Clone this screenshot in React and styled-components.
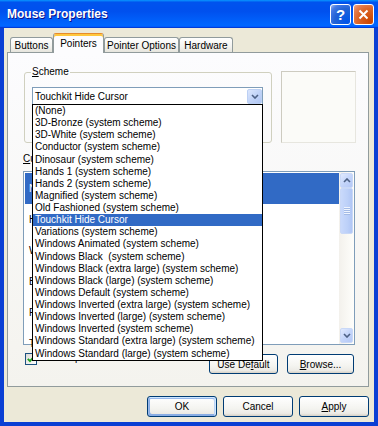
import React from 'react';
import styled, { createGlobalStyle, css } from 'styled-components';

const GlobalStyle = createGlobalStyle`
  html, body {
    margin: 0;
    padding: 0;
    background: #ffffff;
  }
  body {
    font-family: "Liberation Sans", Arial, sans-serif;
    font-size: 10px;
    color: #000;
  }
`;

const Window = styled.div`
  width: 378px;
  height: 426px;
  display: flex;
  flex-direction: column;
  overflow: hidden;
`;

const TitleBar = styled.div`
  height: 28px;
  flex: none;
  display: flex;
  align-items: center;
  gap: 2px;
  padding: 0 4px 0 7px;
  background: linear-gradient(180deg, #0997ff, #0053ee 8%, #0050ee 40%, #0066ff 88%, #0066ff 93%, #005bff 95%, #003dd7 96%, #003dd7);
`;

const Title = styled.div`
  flex: 1;
  color: #fff;
  font-weight: bold;
  font-size: 12px;
  text-shadow: 1px 1px #0f1089;
`;

const CaptionButton = styled.div`
  width: 21px;
  height: 21px;
  box-sizing: border-box;
  border: 1px solid #fff;
  border-radius: 3px;
  display: flex;
  align-items: center;
  justify-content: center;
  color: #fff;
  font: bold 15px "Liberation Sans", Arial, sans-serif;
  ${(p) =>
    p.$close
      ? css`
          background: radial-gradient(circle at 85% 85%, #cc4600, #dc6527 55%, #e57f52 80%, #f0a98c);
        `
      : css`
          background: radial-gradient(circle at 85% 85%, #0054e9, #2263d5 55%, #4479e4 80%, #a3bbec);
        `}
`;

const Body = styled.div`
  flex: 1;
  display: flex;
  flex-direction: column;
  background: #ece9d8;
  border: 4px solid #0a3fd4;
  border-top: none;
  padding-top: 5px;
`;

const TabStrip = styled.div`
  height: 19px;
  display: flex;
  align-items: flex-end;
  margin-left: 6px;
`;

const Tab = styled.div`
  position: relative;
  box-sizing: border-box;
  width: ${(p) => p.$w}px;
  height: 15px;
  border: 1px solid #919b9c;
  border-bottom: none;
  border-radius: 3px 3px 0 0;
  background: linear-gradient(180deg, #ffffff, #f3f3ef 60%, #e6e5dd);
  display: flex;
  align-items: center;
  justify-content: center;
  white-space: nowrap;
  ${(p) =>
    p.$active &&
    css`
      height: 20px;
      margin-bottom: -1px;
      z-index: 1;
      border-top: 1px solid #e68b2c;
      box-shadow: inset 0 2px #ffc73c;
      background: #fcfcfe;
    `}
`;

const TabPanel = styled.div`
  box-sizing: border-box;
  width: 362px;
  height: 335px;
  margin-left: 3px;
  border: 1px solid #919b9c;
  background: linear-gradient(180deg, #fcfcfe, #f4f3ee);
  padding: 13px 12px 0 15px;
  display: flex;
  flex-direction: column;
`;

const TopRow = styled.div`
  display: flex;
  align-items: flex-start;
`;

const Group = styled.fieldset`
  box-sizing: border-box;
  width: 248px;
  margin: 0 0 0 1px;
  padding: 0 7px 37px 7px;
  border: 1px solid #d0d0bf;
  border-radius: 3px;
  min-width: 0;
`;

const Legend = styled.legend`
  padding: 0 1px;
  margin-left: -1px;
  line-height: 12px;
`;

const Key = styled.span`
  text-decoration: underline;
`;

const Combo = styled.div`
  position: relative;
  box-sizing: border-box;
  width: 231px;
  height: 18px;
  margin-top: 9px;
  border: 1px solid #7f9db9;
  background: #fff;
  display: flex;
  align-items: center;
  padding-left: 2px;
`;

const ComboText = styled.div`
  flex: 1;
`;

const ComboButton = styled.div`
  box-sizing: border-box;
  width: 15px;
  height: 15px;
  border: 1px solid #bcd0f4;
  border-radius: 2px;
  background: linear-gradient(135deg, #dce7fd, #c2d4f8 50%, #b1c7f4);
  display: flex;
  align-items: center;
  justify-content: center;
`;

const DropList = styled.div`
  position: absolute;
  left: -1px;
  top: 100%;
  width: 231px;
  height: 257px;
  box-sizing: border-box;
  border: 1px solid #000;
  background: #fff;
  z-index: 10;
  overflow: hidden;
`;

const DropItem = styled.div`
  height: 12.14px;
  line-height: 12.14px;
  padding-left: 2px;
  white-space: pre;
  overflow: hidden;
  ${(p) =>
    p.$selected &&
    css`
      background: #316ac5;
      color: #fff;
    `}
`;

const Preview = styled.div`
  box-sizing: border-box;
  width: 75px;
  height: 72px;
  margin: 5px 0 0 9px;
  border: 1px solid #cdcbc0;
  border-right-color: #e7e6df;
  border-bottom-color: #e7e6df;
  background: #fbfbf8;
`;

const SectionLabel = styled.div`
  line-height: 12px;
  margin: 10px 0 6px 0;
`;

const CustomizeList = styled.div`
  box-sizing: border-box;
  width: 332px;
  height: 174px;
  border: 1px solid #7f9db9;
  background: #fff;
  display: flex;
`;

const Rows = styled.div`
  flex: 1;
  padding-top: 1px;
`;

const Row = styled.div`
  height: 31px;
  margin-left: 1px;
  padding-left: 4px;
  display: flex;
  align-items: center;
  white-space: nowrap;
  ${(p) =>
    p.$selected &&
    css`
      background: #316ac5;
      color: #fff;
    `}
`;

const Scrollbar = styled.div`
  width: 15px;
  display: flex;
  flex-direction: column;
  background: linear-gradient(90deg, #f3f1ec, #fefefb);
`;

const ScrollButton = styled.div`
  box-sizing: border-box;
  height: 15px;
  margin: 1px 1px 0 1px;
  border: 1px solid #c9d8f7;
  border-radius: 2px;
  background: linear-gradient(135deg, #e1eafe, #c4d5fa 50%, #b4c8f6);
  display: flex;
  align-items: center;
  justify-content: center;
  ${(p) => p.$bottom && css`margin: auto 1px 1px 1px;`}
`;

const Thumb = styled.div`
  box-sizing: border-box;
  height: 46px;
  margin: 0 1px;
  border: 1px solid #c9d8f7;
  border-radius: 2px;
  background: linear-gradient(90deg, #c9d9fb, #bcd0f8 60%, #b0c6f5);
  display: flex;
  align-items: center;
  justify-content: center;
`;

const Grip = styled.div`
  width: 6px;
  height: 8px;
  background: repeating-linear-gradient(180deg, #eef4fe 0 1px, #a4bbe6 1px 2px);
`;

const BottomRow = styled.div`
  display: flex;
  align-items: flex-start;
  margin-top: 9px;
  padding-right: 2px;
`;

const Check = styled.div`
  box-sizing: border-box;
  width: 12px;
  height: 12px;
  margin: -1px 0 0 2px;
  border: 1px solid #1c5180;
  background: linear-gradient(135deg, #dcdcd7, #fff);
  display: flex;
  align-items: center;
  justify-content: center;
`;

const CheckLabel = styled.div`
  margin: -2px 0 0 4px;
  line-height: 12px;
`;

const Button = styled.div`
  box-sizing: border-box;
  width: ${(p) => p.$w}px;
  height: ${(p) => p.$h || 20}px;
  margin-left: ${(p) => (p.$push ? 'auto' : `${p.$gap || 0}px`)};
  border: 1px solid #003c74;
  border-radius: 3px;
  background: linear-gradient(180deg, #ffffff, #f4f4f0 60%, #ecebe6 86%, #d6d0c5);
  display: flex;
  align-items: center;
  justify-content: center;
  white-space: nowrap;
  ${(p) =>
    p.$default &&
    css`
      box-shadow: inset -1px 1px #cee7ff, inset 1px 2px #98b8ea, inset -2px 2px #bcd4f6, inset 1px -1px #89ade4, inset 2px -2px #89ade4;
    `}
`;

const ButtonRow = styled.div`
  display: flex;
  justify-content: flex-end;
  gap: 6px;
  margin: 9px 5px 0 0;
`;

const schemes = [
  '(None)',
  '3D-Bronze (system scheme)',
  '3D-White (system scheme)',
  'Conductor (system scheme)',
  'Dinosaur (system scheme)',
  'Hands 1 (system scheme)',
  'Hands 2 (system scheme)',
  'Magnified (system scheme)',
  'Old Fashioned (system scheme)',
  'Touchkit Hide Cursor',
  'Variations (system scheme)',
  'Windows Animated (system scheme)',
  'Windows Black  (system scheme)',
  'Windows Black (extra large) (system scheme)',
  'Windows Black (large) (system scheme)',
  'Windows Default (system scheme)',
  'Windows Inverted (extra large) (system scheme)',
  'Windows Inverted (large) (system scheme)',
  'Windows Inverted (system scheme)',
  'Windows Standard (extra large) (system scheme)',
  'Windows Standard (large) (system scheme)',
];

const pointers = ['Normal Select', 'Help Select', 'Working In Background', 'Busy', 'Precision Select', 'Text Select'];

const Chevron = ({ up }) => (
  <svg width="8" height="5" viewBox="0 0 8 5">
    <path d={up ? 'M1 4L4 1L7 4' : 'M1 1L4 4L7 1'} fill="none" stroke="#4d6185" strokeWidth="1.6" />
  </svg>
);

function App() {
  const tabs = [
    { label: 'Buttons', w: 43 },
    { label: 'Pointers', w: 51, active: true },
    { label: 'Pointer Options', w: 75 },
    { label: 'Hardware', w: 54 },
  ];

  return (
    <Window>
      <GlobalStyle />
      <TitleBar>
        <Title>Mouse Properties</Title>
        <CaptionButton>?</CaptionButton>
        <CaptionButton $close>
          <svg width="11" height="11" viewBox="0 0 11 11">
            <path d="M1.5 1.5L9.5 9.5M9.5 1.5L1.5 9.5" stroke="#fff" strokeWidth="2" />
          </svg>
        </CaptionButton>
      </TitleBar>
      <Body>
        <TabStrip>
          {tabs.map((t) => (
            <Tab key={t.label} $w={t.w} $active={t.active}>
              {t.label}
            </Tab>
          ))}
        </TabStrip>
        <TabPanel>
          <TopRow>
            <Group>
              <Legend>
                <Key>S</Key>cheme
              </Legend>
              <Combo>
                <ComboText>Touchkit Hide Cursor</ComboText>
                <ComboButton>
                  <Chevron />
                </ComboButton>
                <DropList>
                  {schemes.map((s) => (
                    <DropItem key={s} $selected={s === 'Touchkit Hide Cursor'}>
                      {s}
                    </DropItem>
                  ))}
                </DropList>
              </Combo>
            </Group>
            <Preview />
          </TopRow>
          <SectionLabel>
            <Key>C</Key>ustomize:
          </SectionLabel>
          <CustomizeList>
            <Rows>
              {pointers.map((p, i) => (
                <Row key={p} $selected={i === 0}>
                  {p}
                </Row>
              ))}
            </Rows>
            <Scrollbar>
              <ScrollButton>
                <Chevron up />
              </ScrollButton>
              <Thumb>
                <Grip />
              </Thumb>
              <ScrollButton $bottom>
                <Chevron />
              </ScrollButton>
            </Scrollbar>
          </CustomizeList>
          <BottomRow>
            <Check>
              <svg width="8" height="8" viewBox="0 0 8 8">
                <path d="M0.8 3.8L3 6.2L7.2 1.4" fill="none" stroke="#21a121" strokeWidth="1.8" />
              </svg>
            </Check>
            <CheckLabel>Enable pointer shadow</CheckLabel>
            <Button $w={69} $push>
              Use De<Key>f</Key>ault
            </Button>
            <Button $w={67} $gap={9}>
              <Key>B</Key>rowse...
            </Button>
          </BottomRow>
        </TabPanel>
        <ButtonRow>
          <Button $w={70} $h={21} $default>
            OK
          </Button>
          <Button $w={70} $h={21}>
            Cancel
          </Button>
          <Button $w={70} $h={21}>
            <Key>A</Key>pply
          </Button>
        </ButtonRow>
      </Body>
    </Window>
  );
}

export default App;
